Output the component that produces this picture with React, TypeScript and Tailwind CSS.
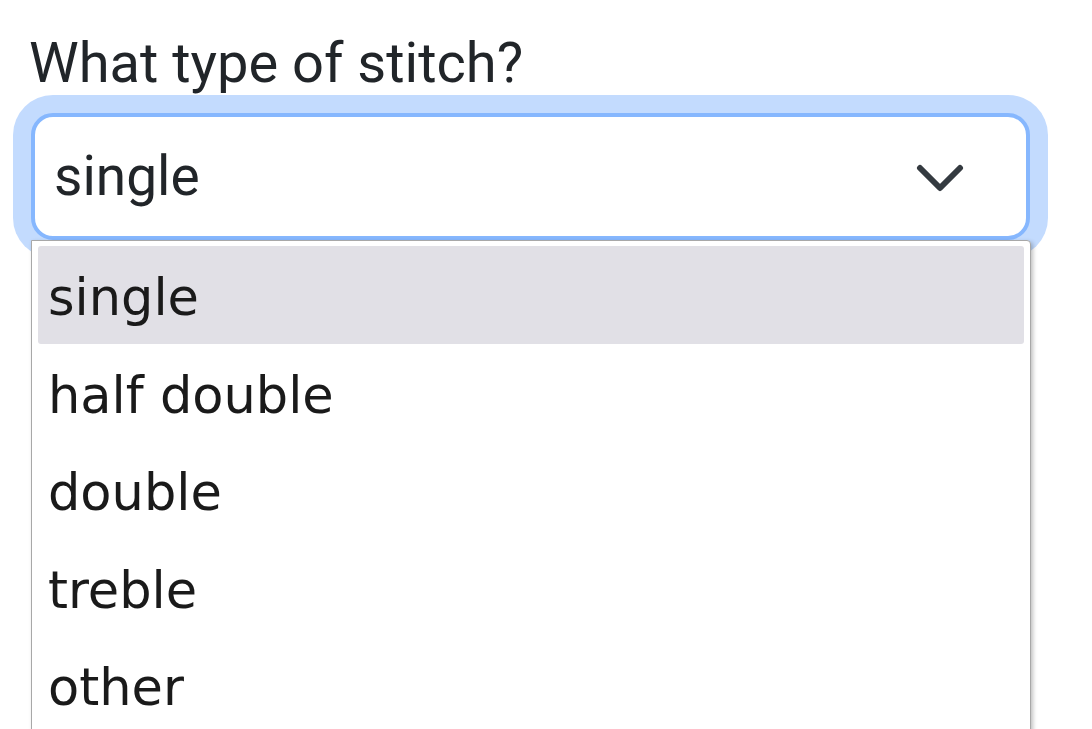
const options = ['single', 'half double', 'double', 'treble', 'other']

function Chevron() {
  return (
    <svg width="48" height="30" viewBox="0 0 48 30" fill="none">
      <path d="M4 5 L24 25 L44 5" stroke="#343a40" strokeWidth="6" strokeLinecap="round" strokeLinejoin="round" />
    </svg>
  )
}

export default function App() {
  return (
    <div className="h-[729px] w-[1092px] overflow-hidden bg-white pl-[31px] pt-[21px] text-[#212529]" style={{ fontFamily: 'Roboto, "Liberation Sans", sans-serif' }}>
      <div className="-ml-[2px] text-[56px] leading-[84px]">What type of stitch?</div>

      <div className="relative mt-[8px] w-[999px]">
        {/* Select control with focus ring */}
        <div className="flex h-[127px] items-center justify-between rounded-[22px] border-[4px] border-[#86b7fe] bg-white pl-[19px] pr-[62px] shadow-[0_0_0_18px_#c3dbfe]">
          <span className="text-[55px] leading-none">single</span>
          <div className="mt-[2px]"><Chevron /></div>
        </div>

        {/* Native dropdown popup */}
        <div className="absolute left-0 top-[127px] z-10 h-[500px] w-[1000px] rounded-tr-[4px] border border-[#a8a8a8] bg-white px-[6px] pt-[5px] shadow-[2px_2px_4px_rgba(0,0,0,0.25)]" style={{ fontFamily: '"DejaVu Sans", sans-serif' }}>
          {options.map((o, i) => (
            <div
              key={o}
              className={`h-[97.5px] rounded-[3px] pl-[10px] pt-[3px] text-[51px] leading-[97px] text-[#1a1a1a] ${i === 0 ? 'bg-[#e1e0e6]' : ''}`}
            >
              {o}
            </div>
          ))}
        </div>
      </div>
    </div>
  )
}
